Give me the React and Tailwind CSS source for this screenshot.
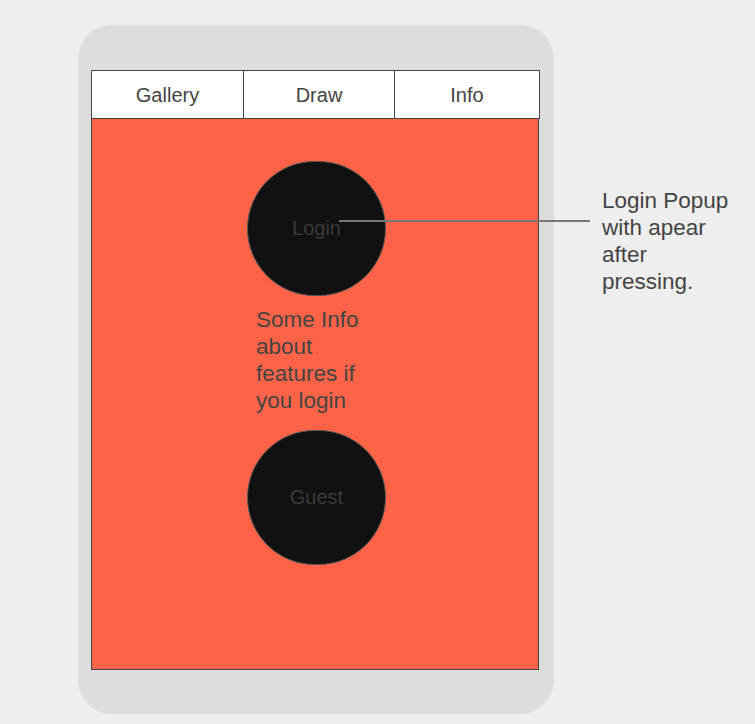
export default function App() {
  const tabs = ["Gallery", "Draw", "Info"];

  return (
    <div
      className="relative flex h-[724px] w-[755px] overflow-hidden bg-[#eeeeee] text-[#444444]"
      style={{ fontFamily: '"Liberation Sans", Arial, sans-serif' }}
    >
      {/* Phone frame */}
      <div className="ml-[78px] mt-[25px] h-[689px] w-[476px] shrink-0 rounded-[34px] bg-[#dddddd] pl-[13px] pt-[45px]">
        {/* Tabs */}
        <div className="flex h-[49px] w-[449px] border border-[#444444] bg-white">
          {tabs.map((t, i) => (
            <div
              key={t}
              className={
                "flex items-center justify-center text-[20px] " +
                (i === 0 ? "w-[152px] border-r border-[#444444]" : i === 1 ? "w-[151px] border-r border-[#444444]" : "flex-1")
              }
            >
              {t}
            </div>
          ))}
        </div>

        {/* Content panel */}
        <div className="-mt-px flex h-[552px] w-[448px] flex-col border border-[#444444] bg-[#ff6347]">
          <div className="ml-[155px] mt-[42px] flex h-[135px] w-[139px] items-center justify-center rounded-full border border-[#555555] bg-[#111111] pb-px text-[20px] text-[#3b3b3b]">
            Login
          </div>
          <p className="ml-[164px] mt-[10px] w-[130px] text-[22.5px] leading-[27px] text-[#444444]">
            Some Info about features if you login
          </p>
          <div className="ml-[155px] mt-[16px] flex h-[135px] w-[139px] items-center justify-center rounded-full border border-[#555555] bg-[#111111] pb-px text-[20px] text-[#3b3b3b]">
            Guest
          </div>
        </div>
      </div>

      {/* Annotation */}
      <p className="ml-[48px] mt-[187px] w-[135px] text-[22.5px] leading-[27px] text-[#444444]">
        Login Popup with apear after pressing.
      </p>
      <div className="absolute left-[339px] top-[220px] h-[2px] w-[251px] bg-[#777777]" />
    </div>
  );
}
